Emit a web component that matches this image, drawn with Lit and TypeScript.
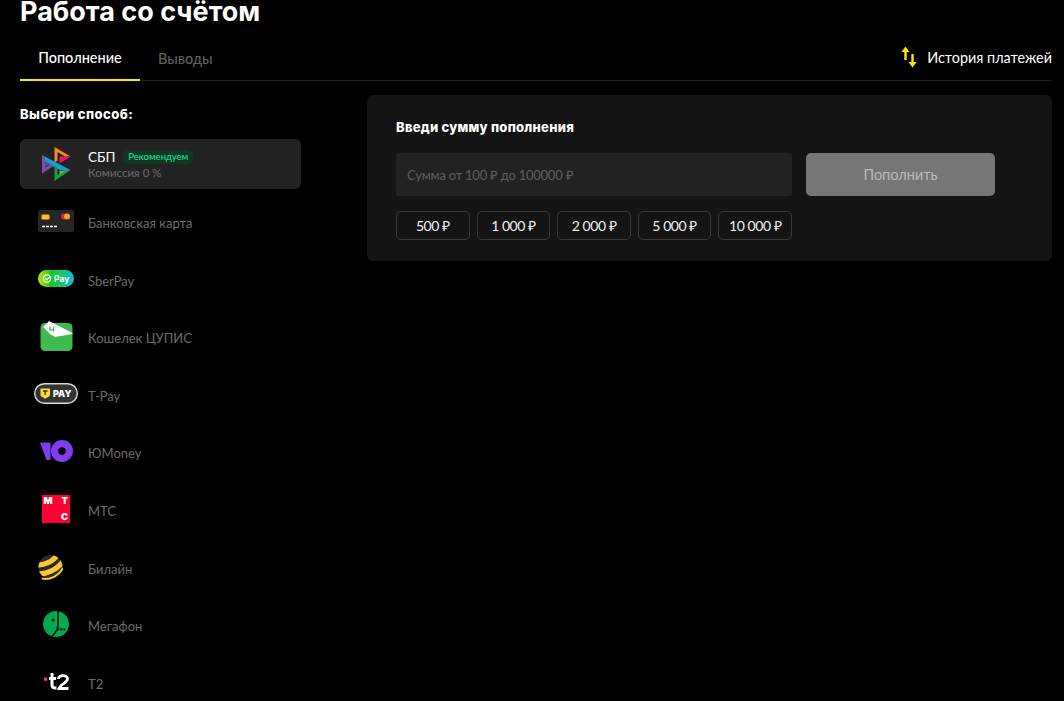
import { LitElement, html, css, svg } from "lit";
import { customElement } from "lit/decorators.js";

const icons: Record<string, unknown> = {
  sbp: svg`<svg width="29" height="34" viewBox="0 0 29 34">
    <path d="M12.5 0 L28.5 9.5 L23 9.5 L15.5 5 V13.5 L12.5 15.5Z" fill="#f58a1f"/>
    <path d="M17.5 9.5 H28.5 L17.5 16.5Z" fill="#e5175f"/>
    <path d="M0 8 L28.5 23 H18 L0 13.5Z" fill="#1a9ad6"/>
    <path d="M0 8 L3 10 V20.5 L8 17.5 L11 19.5 L0 26.5Z" fill="#7b4ea3"/>
    <path d="M3 14 L8 16.8 L3 19.8Z" fill="#5b4a9a"/>
    <path d="M12.5 34 L28.5 23 H23 L15.5 28 V20 L12.5 18.5Z" fill="#1a9e4b"/>
    <path d="M17.5 23.5 H24 L17.5 28Z" fill="#6cb33f"/>
  </svg>`,
  card: svg`<svg width="36" height="22" viewBox="0 0 36 22">
    <rect width="36" height="22" rx="2" fill="#262626"/>
    <rect x="3.5" y="4.5" width="8" height="5" rx="1.2" fill="#fbc02d"/>
    <circle cx="26" cy="6.5" r="3" fill="#e8202a"/><circle cx="29" cy="6.5" r="3" fill="#f79e1b"/>
    <path d="M4 16.5h3M8 16.5h3M12 16.5h3M16 16.5h3" stroke="#fff" stroke-width="1.4"/>
  </svg>`,
  sber: svg`<svg width="36" height="17" viewBox="0 0 36 17">
    <defs><linearGradient id="sb" x1="0" x2="1" y1="0.5" y2="0.5"><stop offset="0" stop-color="#c8e600"/><stop offset=".35" stop-color="#22c51e"/><stop offset=".7" stop-color="#10c878"/><stop offset="1" stop-color="#16b8e8"/></linearGradient></defs>
    <rect width="36" height="17" rx="8.5" fill="url(#sb)"/>
    <circle cx="9" cy="8.5" r="3.6" fill="none" stroke="#fff" stroke-width="1.2"/>
    <path d="M7.2 8.3l1.6 1.5 3.2-3.2" fill="none" stroke="#fff" stroke-width="1.2"/>
    <text x="16" y="11.5" class="logo-t" fill="#fff">Pay</text>
  </svg>`,
  cupis: svg`<svg width="33" height="30" viewBox="0 0 33 30">
    <rect x="0.5" y="2" width="32" height="28" rx="4.5" fill="#3fba50"/>
    <path d="M3 6 L9 0 L32.5 12 V13 L15 16 L10 13Z" fill="#fff"/>
    <path d="M10 5.5v3.4h3.6v-3.4M13.6 7.5v3" fill="none" stroke="#3fba50" stroke-width="1.4"/>
  </svg>`,
  tpay: svg`<svg width="44" height="21" viewBox="0 0 44 21">
    <rect x="0.7" y="0.7" width="42.6" height="19.6" rx="9.8" fill="#333" stroke="#d8d8d8" stroke-width="1.4"/>
    <path d="M6.5 5.5h9.5v6.2c0 1.8-2.8 2.6-4.7 4-1.9-1.4-4.8-2.2-4.8-4Z" fill="#ffdd2d"/>
    <path d="M9 8h4.5M11.2 8v4" stroke="#333" stroke-width="1.4"/>
    <text x="19" y="14" class="logo-b" fill="#fff">PAY</text>
  </svg>`,
  yoomoney: svg`<svg width="33" height="22" viewBox="0 0 33 22">
    <path d="M0 2.5 H10.5 V20 H6.5Z" fill="#7e3df0"/>
    <path fill-rule="evenodd" d="M22 0a11 11 0 1 1 0 22a11 11 0 0 1 0-22Zm0 7.3a3.8 3.8 0 1 0 0 7.6a3.8 3.8 0 0 0 0-7.6Z" fill="#7e3df0"/>
  </svg>`,
  mts: svg`<svg width="28" height="28" viewBox="0 0 28 28">
    <rect width="28" height="28" fill="#ff0032"/>
    <text x="1.5" y="8.5" class="logo-m" fill="#fff">M</text>
    <text x="19.5" y="8.5" class="logo-m" fill="#fff">T</text>
    <text x="19" y="25" class="logo-m" fill="#fff">C</text>
  </svg>`,
  beeline: svg`<svg class="bee" width="25" height="26" viewBox="0 0 26 26">
    <defs><clipPath id="bc"><circle cx="13" cy="13" r="12.5"/></clipPath></defs>
    <circle cx="13" cy="13" r="12.5" fill="#2a2a2a"/>
    <g clip-path="url(#bc)" fill="none" stroke="#fdc82f" stroke-width="5.5">
      <path d="M-2 11 C6 11 16 8 21 -1"/><path d="M-1 20 C9 21 20 16 27 6"/>
    </g>
    <path d="M4 25 C12 27 22 22 26 14" fill="none" stroke="#fdc82f" stroke-width="2"/>
  </svg>`,
  megafon: svg`<svg width="26" height="26" viewBox="0 0 26 26">
    <circle cx="13" cy="13" r="13" fill="#00a84f"/>
    <path d="M15 0 V13 C15 18 13 22 9 25" fill="none" stroke="#000" stroke-width="1.4"/>
    <circle cx="10" cy="9" r="1.5" fill="#000"/>
    <path d="M14.5 17.5h1.8v1.8h-1.8ZM17.5 17.5h1.8v1.8h-1.8ZM20.5 17.5h1.8v1.8h-1.8Z" fill="#000"/>
  </svg>`,
  t2: svg`<svg width="25" height="17" viewBox="0 0 25 17">
    <rect x="0" y="4.5" width="3.2" height="3.2" fill="#ff3495"/>
    <path d="M8 0v11.5c0 2 1 3.5 3 3.5h1.5M5 5.5h7" fill="none" stroke="#fff" stroke-width="3"/>
    <path d="M14.5 6c0-4.5 9-4.5 9 0c0 3.5-7 5-8.5 9.5h9.5" fill="none" stroke="#fff" stroke-width="2.8"/>
  </svg>`,
};

const methods = [
  ["card", "Банковская карта"],
  ["sber", "SberPay"],
  ["cupis", "Кошелек ЦУПИС"],
  ["tpay", "T-Pay"],
  ["yoomoney", "ЮMoney"],
  ["mts", "МТС"],
  ["beeline", "Билайн"],
  ["megafon", "Мегафон"],
  ["t2", "Т2"],
];
const amounts = ["500 ₽", "1 000 ₽", "2 000 ₽", "5 000 ₽", "10 000 ₽"];

@customElement("app-root")
export class AppRoot extends LitElement {
  static styles = css`
    :host { display: block; height: 701px; overflow: hidden; background: #000; color: #fff;
      font-family: "Lato", "Open Sans", sans-serif; font-size: 14px; padding: 0 12px 0 20px; box-sizing: border-box; }
    h1 { margin: 0; font: 700 27px/24px "Inter", sans-serif; color: #fff; }
    .tabs { display: flex; align-items: stretch; height: 50px; margin-top: 7px; border-bottom: 1px solid #1f1f1f; box-sizing: border-box; }
    .tab { width: 120px; display: flex; align-items: center; justify-content: center; color: #fff; border-bottom: 2px solid #ffe600; margin-bottom: -1px; box-sizing: border-box; padding-top: 4px; font-size: 14.5px; font-weight: 500; }
    .tab.off { width: auto; padding: 4px 0 0; margin-left: 18px; border: 0; color: #5f5f5f; }
    .history { margin-left: auto; display: flex; align-items: center; gap: 10px; font-size: 14.4px; padding-top: 3px; }
    .body { display: flex; }
    .left { width: 281px; margin-right: 66px; flex: none; }
    .left h2 { margin: 25px 0 0; font: 800 13px/16px "Inter", sans-serif; letter-spacing: 0.45px; }
    .list { margin-top: 17px; display: flex; flex-direction: column; gap: 7.6px; }
    .row { height: 50px; display: flex; align-items: center; border-radius: 6px; color: #6b6b6b; font-size: 13px; }
    .row.first { background: #222; margin-bottom: 1.4px; }
    .ico { width: 68px; height: 50px; flex: none; display: flex; justify-content: center; align-items: center; box-sizing: border-box; padding: 0 0 4px 4px; }
    .first .ico { padding: 0 0 0 4px; }
    .bee { margin-right: 11px; }
    .name { display: flex; align-items: center; gap: 7px; color: #fff; font-size: 13.5px; line-height: 16px; }
    .badge { background: #123524; color: #1aee90; font-size: 9.5px; line-height: 14px; padding: 0 6px; border-radius: 7px; }
    .sub { color: #6b6b6b; font-size: 11.5px; line-height: 14px; margin-top: 1px; }
    .panel { flex: 1; margin-top: 14px; height: 166px; background: #141414; border-radius: 6px; padding: 24px 29px; box-sizing: border-box; }
    .panel h3 { margin: 0; font: 800 13px/16px "Inter", sans-serif; letter-spacing: 0.25px; }
    .form { display: flex; gap: 14px; margin-top: 18px; }
    .input { width: 396px; height: 43px; background: #222; border-radius: 3px; color: #5f5f5f; font-size: 13px; letter-spacing: -0.25px; display: flex; align-items: center; padding-left: 11px; box-sizing: border-box; }
    .btn { width: 189px; height: 43px; background: #767676; border-radius: 5px; color: #bcbcbc; font-size: 14.5px; display: flex; align-items: center; justify-content: center; }
    .amounts { display: flex; gap: 7px; margin-top: 15px; width: 396px; }
    .amt { flex: 1; height: 29px; border: 1px solid #3a3a3a; border-radius: 5px; box-sizing: border-box; display: flex; align-items: center; justify-content: center; font-size: 14px; letter-spacing: -0.45px; color: #f0f0f0; }
    .logo-t { font: 700 8.5px "Inter", sans-serif; }
    .logo-b { font: 900 9px "Inter", sans-serif; }
    .logo-m { font: 900 9.5px "Inter", sans-serif; }
    svg { display: block; }
  `;

  render() {
    return html`
      <h1>Работа со счётом</h1>
      <div class="tabs">
        <div class="tab">Пополнение</div>
        <div class="tab off">Выводы</div>
        <div class="history">
          <svg width="16" height="22" viewBox="0 0 16 22">
            <path d="M4.5 0.5 L8.5 6 H5.7 V14 H3.3 V6 H0.5Z M11.5 21.5 L15.5 16 H12.7 V8 H10.3 V16 H7.5Z" fill="#ffe600"/>
          </svg>
          <span>История платежей</span>
        </div>
      </div>
      <div class="body">
        <div class="left">
          <h2>Выбери способ:</h2>
          <div class="list">
            <div class="row first">
              <div class="ico">${icons.sbp}</div>
              <div>
                <div class="name">СБП <span class="badge">Рекомендуем</span></div>
                <div class="sub">Комиссия 0 %</div>
              </div>
            </div>
            ${methods.map(([k, t]) => html`<div class="row"><div class="ico">${icons[k]}</div><div>${t}</div></div>`)}
          </div>
        </div>
        <div class="panel">
          <h3>Введи сумму пополнения</h3>
          <div class="form">
            <div class="input">Сумма от 100 ₽ до 100000 ₽</div>
            <div class="btn">Пополнить</div>
          </div>
          <div class="amounts">${amounts.map((a) => html`<div class="amt">${a}</div>`)}</div>
        </div>
      </div>
    `;
  }
}
